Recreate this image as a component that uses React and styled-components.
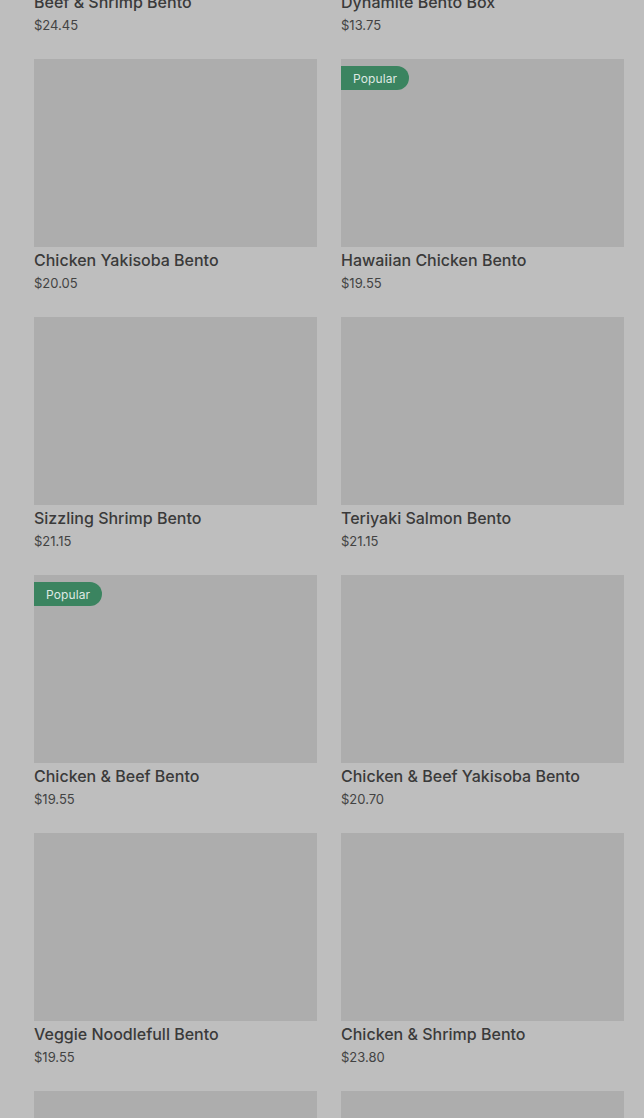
import styled, { createGlobalStyle } from "styled-components";

const items = [
  { name: "Beef & Shrimp Bento", price: "$24.45" },
  { name: "Dynamite Bento Box", price: "$13.75" },
  { name: "Chicken Yakisoba Bento", price: "$20.05" },
  { name: "Hawaiian Chicken Bento", price: "$19.55", popular: true },
  { name: "Sizzling Shrimp Bento", price: "$21.15" },
  { name: "Teriyaki Salmon Bento", price: "$21.15" },
  { name: "Chicken & Beef Bento", price: "$19.55", popular: true },
  { name: "Chicken & Beef Yakisoba Bento", price: "$20.70" },
  { name: "Veggie Noodlefull Bento", price: "$19.55" },
  { name: "Chicken & Shrimp Bento", price: "$23.80" },
  { name: "Spicy Chicken Bento", price: "$19.55" },
  { name: "Salmon & Shrimp Bento", price: "$24.45" },
];

export default function App() {
  return (
    <>
      <GlobalStyle />
      <Page>
        <Grid>
          {items.map((item) => (
            <Card key={item.name}>
              <Photo>{item.popular && <Badge>Popular</Badge>}</Photo>
              <Title>{item.name}</Title>
              <Price>{item.price}</Price>
            </Card>
          ))}
        </Grid>
      </Page>
    </>
  );
}

const GlobalStyle = createGlobalStyle`
  html, body {
    margin: 0;
    padding: 0;
    background: #bebebe;
  }
  body {
    font-family: Inter, "Noto Sans", Roboto, sans-serif;
  }
`;

const Page = styled.div`
  padding: 0 20px 40px 34px;
  background: #bebebe;
`;

const Grid = styled.div`
  display: grid;
  grid-template-columns: 283px 283px;
  column-gap: 24px;
  row-gap: 25px;
  margin-top: -199px;
`;

const Card = styled.div`
  display: flex;
  flex-direction: column;
`;

const Photo = styled.div`
  position: relative;
  height: 188px;
  background: #adadad;
`;

const Badge = styled.span`
  position: absolute;
  top: 7px;
  left: 0;
  height: 24px;
  padding: 0 12px 0 12px;
  display: flex;
  align-items: center;
  border-radius: 0 12px 12px 0;
  background: #3b8460;
  color: #dfe9e3;
  font-size: 12px;
  letter-spacing: 0.1px;
`;

const Title = styled.div`
  margin-top: 3px;
  font-size: 16px;
  line-height: 20px;
  font-weight: 500;
  color: #3a3a3a;
`;

const Price = styled.div`
  margin-top: 4px;
  font-size: 13px;
  line-height: 18px;
  color: #434343;
`;
